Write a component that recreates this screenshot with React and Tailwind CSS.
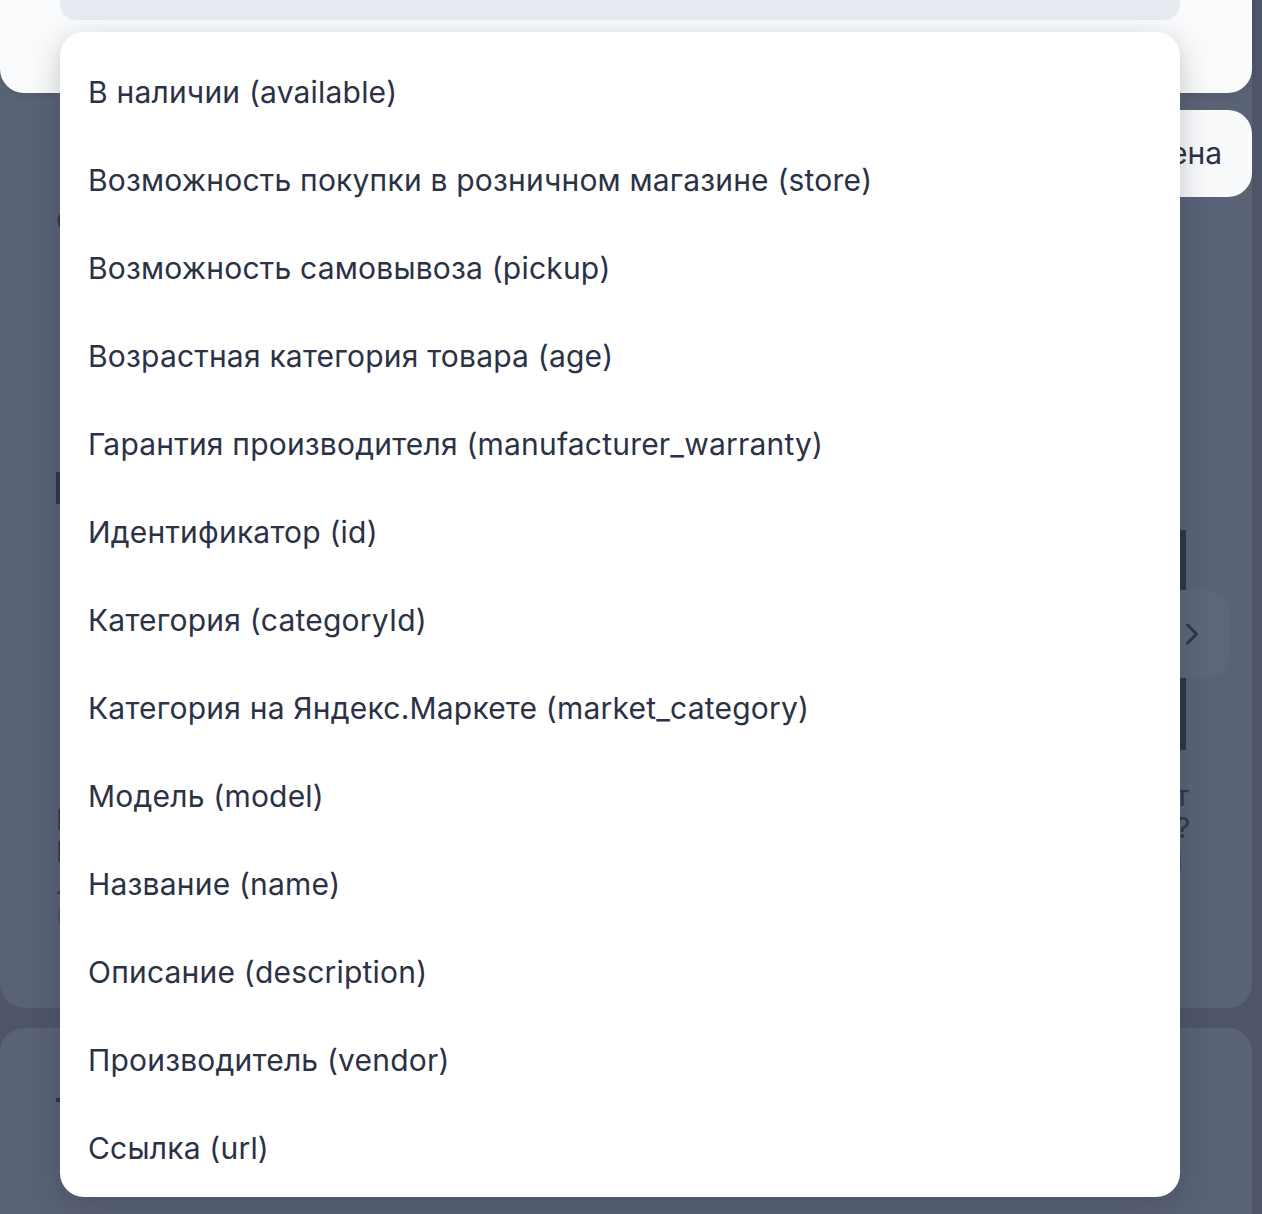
import { ChevronRight } from 'lucide-react';

const fields = [
    'В наличии (available)',
    'Возможность покупки в розничном магазине (store)',
    'Возможность самовывоза (pickup)',
    'Возрастная категория товара (age)',
    'Гарантия производителя (manufacturer_warranty)',
    'Идентификатор (id)',
    'Категория (categoryId)',
    'Категория на Яндекс.Маркете (market_category)',
    'Модель (model)',
    'Название (name)',
    'Описание (description)',
    'Производитель (vendor)',
    'Ссылка (url)',
];

function Backdrop() {
    // dimmed page underneath the overlay
    return (
        <div className="flex h-full flex-col gap-5 bg-[#4e5569] pr-[10px]">
            <div className="relative h-[1008px] rounded-b-[24px] bg-[#5a6276] px-[56px] pt-[200px]">
                <div className="text-[30px] leading-[36px] text-[#2f3649]">о</div>
                <div className="mt-[236px] h-[32px] w-[8px] bg-[#2f3649]"></div>
                <div className="mt-[300px] flex flex-col gap-0 text-[28px] leading-[32px] text-[#2f3649]">
                    <span>П</span>
                    <span>П</span>
                    <span>Л</span>
                    <span className="text-[#4b5367]">6</span>
                </div>
                <div className="absolute right-[66px] top-[530px] h-[220px] w-[6px] bg-[#2f3649]"></div>
                <div className="absolute right-[22px] top-[590px] flex h-[88px] w-[76px] items-center justify-center rounded-[22px] bg-[#5d667a] text-[#2f3649]">
                    <ChevronRight size={36} strokeWidth={2} />
                </div>
                <div className="absolute right-[62px] top-[780px] flex flex-col text-[28px] leading-[32px] text-[#2f3649]">
                    <span>т</span>
                    <span>?</span>
                    <span>ı</span>
                </div>
            </div>
            <div className="flex-1 rounded-t-[24px] bg-[#5a6276] px-[56px] pt-[70px]">
                <div className="h-[4px] w-[8px] bg-[#2f3649]"></div>
            </div>
        </div>
    );
}

export default function App() {
    return (
        <div className="relative h-[1214px] w-[1262px] overflow-hidden font-['Inter',sans-serif] text-[#2b3245]">
            <Backdrop />

            {/* filter popup above the overlay */}
            <div className="absolute left-0 top-0 h-[93px] w-[1252px] rounded-b-[24px] bg-[#fafbfc] shadow-[0_2px_8px_rgba(0,0,0,0.08)]">
                <div className="ml-[60px] h-[20px] w-[1120px] rounded-b-[16px] bg-[#e8ebf2]"></div>
            </div>
            <div className="absolute right-[10px] top-[110px] flex h-[87px] w-[240px] items-center justify-end rounded-[24px] bg-[#f9fafb] pr-[30px] text-[30px]">
                Цена
            </div>

            {/* dropdown */}
            <div className="absolute left-[60px] top-[32px] w-[1120px] rounded-[24px] bg-white pb-[5px] pt-[16px] shadow-[0_8px_30px_rgba(30,36,52,0.25)]">
                {fields.map((f) => (
                    <div key={f} className="flex h-[88px] items-center px-[28px] text-[30px] tracking-[0.2px]">
                        {f}
                    </div>
                ))}
            </div>
        </div>
    );
}
